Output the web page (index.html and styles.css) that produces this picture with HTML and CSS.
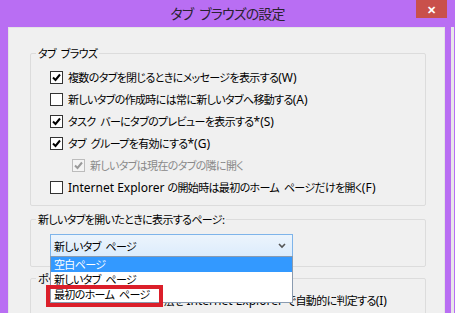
FILE: index.html
```html
<!DOCTYPE html>
<html lang="ja">
<head>
<meta charset="utf-8">
<link rel="stylesheet" href="styles.css">
</head>
<body>
<div class="window">
  <div class="titlebar">
    <div class="title">タブ ブラウズの設定</div>
    <div class="close">✕</div>
  </div>
  <div class="frame">
    <div class="client">
      <fieldset class="group g1">
        <legend>タブ ブラウズ</legend>
        <div class="row"><span class="cb on"><svg viewBox="0 0 11 11"><path d="M2 5.5 L4.5 8 L9 2.5"/></svg></span>複数のタブを閉じるときにメッセージを表示する<span class="lat">(W)</span></div>
        <div class="row"><span class="cb"></span>新しいタブの作成時には常に新しいタブへ移動する<span class="lat">(A)</span></div>
        <div class="row"><span class="cb on"><svg viewBox="0 0 11 11"><path d="M2 5.5 L4.5 8 L9 2.5"/></svg></span>タスク バーにタブのプレビューを表示する<span class="lat">*(S)</span></div>
        <div class="row"><span class="cb on"><svg viewBox="0 0 11 11"><path d="M2 5.5 L4.5 8 L9 2.5"/></svg></span>タブ グループを有効にする<span class="lat">*(G)</span></div>
        <div class="row sub disabled"><span class="cb on"><svg viewBox="0 0 11 11"><path d="M2 5.5 L4.5 8 L9 2.5"/></svg></span>新しいタブは現在のタブの隣に開く</div>
        <div class="row"><span class="cb"></span><span class="lat">Internet Explorer </span>の開始時は最初のホーム ページだけを開く<span class="lat">(F)</span></div>
      </fieldset>
      <fieldset class="group g2">
        <legend>新しいタブを開いたときに表示するページ:</legend>
        <div class="combo">
          <span class="combo-text">新しいタブ ページ</span>
          <svg class="chev" viewBox="0 0 8 6"><path d="M1 1 L4 4 L7 1"/></svg>
          <div class="list">
            <div class="item sel">空白ページ</div>
            <div class="item">新しいタブ ページ</div>
            <div class="item">最初のホーム ページ</div>
            <div class="mark"></div>
          </div>
        </div>
      </fieldset>
      <fieldset class="group g3">
        <legend>ポップアップの発生時:</legend>
        <div class="row"><span class="radio"></span>ポップアップの表示方法を<span class="lat"> Internet Explorer </span>で自動的に判定する<span class="lat">(I)</span></div>
      </fieldset>
    </div>
    <div class="rim"></div>
  </div>
</div>
</body>
</html>
```

FILE: styles.css
```css
html, body {
  margin: 0;
  padding: 0;
}
body {
  width: 455px;
  height: 313px;
  overflow: hidden;
  background: #b96ef3;
  font-family: "Noto Sans CJK JP", "Noto Sans", sans-serif;
  font-feature-settings: "palt";
  font-size: 11px;
  letter-spacing: -0.65px;
  word-spacing: 3px;
  color: #000;
}
.lat {
  font-family: "Noto Sans", "Noto Sans CJK JP", sans-serif;
  font-size: 12px;
  letter-spacing: 0;
  word-spacing: 0;
  white-space: pre;
}
.window {
  width: 455px;
  height: 313px;
  display: flex;
  flex-direction: column;
}
.titlebar {
  height: 27px;
  flex: none;
  display: flex;
  justify-content: center;
  align-items: flex-start;
  position: relative;
}
.title {
  font-size: 14px;
  line-height: 17px;
  margin-top: 5px;
  color: #2a2230;
  letter-spacing: -0.9px;
  word-spacing: 4px;
}
.close {
  position: absolute;
  top: 0;
  left: 416px;
  width: 31px;
  height: 18px;
  background: #c9504b;
  color: #fff;
  font-size: 11px;
  letter-spacing: 0;
  line-height: 18px;
  text-align: center;
  font-weight: bold;
}
.frame {
  flex: 1;
  display: flex;
  padding-left: 8px;
}
.client {
  width: 437px;
  background: #f0f0f0;
  border: 1px solid #e4e4e4;
  border-bottom: none;
  padding: 18px 0 0 21px;
  box-sizing: border-box;
  flex: none;
}
.rim {
  margin-left: 6px;
  width: 3px;
  background: #e8e8e8;
}
.group {
  width: 396px;
  box-sizing: border-box;
  margin: 0;
  border: 1px solid #dcdcdc;
  border-radius: 2px;
  padding: 0 0 0 19px;
  min-width: 0;
}
.group legend {
  padding: 0 2px;
  margin-left: -14px;
  line-height: 14px;
  height: 14px;
}
.g1 {
  padding-top: 6px;
  padding-bottom: 7px;
}
.g2 {
  margin-top: 6px;
  padding-top: 8px;
  padding-bottom: 9px;
}
.g3 {
  margin-top: 4px;
  padding-top: 4px;
  padding-bottom: 10px;
}
.row {
  height: 22px;
  display: flex;
  align-items: center;
  white-space: nowrap;
}
.row.sub {
  padding-left: 22px;
}
.row.disabled {
  color: #8a8a8a;
}
.cb {
  width: 13px;
  height: 13px;
  box-sizing: border-box;
  border: 1px solid #333;
  background: #fff;
  margin-right: 5px;
  flex: none;
  display: flex;
}
.cb svg {
  width: 11px;
  height: 11px;
}
.cb svg path {
  fill: none;
  stroke: #000;
  stroke-width: 2;
}
.disabled .cb {
  border-color: #bcbcbc;
  background: #f4f4f4;
}
.disabled .cb svg path {
  stroke: #9a9a9a;
}
.radio {
  width: 13px;
  height: 13px;
  box-sizing: border-box;
  border: 1px solid #333;
  border-radius: 50%;
  background: #fff;
  margin-right: 5px;
  flex: none;
}
.combo {
  position: relative;
  width: 243px;
  height: 23px;
  box-sizing: border-box;
  border: 1px solid #7eb4ea;
  background: linear-gradient(#ecf4fc, #dcecfc);
  display: flex;
  align-items: center;
  padding-left: 3px;
}
.combo-text {
  flex: 1;
}
.chev {
  width: 8px;
  height: 6px;
  margin-right: 6px;
}
.chev path {
  fill: none;
  stroke: #555;
  stroke-width: 1.6;
}
.list {
  position: absolute;
  left: -1px;
  top: 21px;
  width: 243px;
  height: 47px;
  box-sizing: border-box;
  border: 1px solid #8a9bb0;
  background: #fff;
  z-index: 2;
}
.item {
  height: 15px;
  line-height: 15px;
  padding-left: 3px;
  white-space: nowrap;
}
.item.sel {
  background: #3399ff;
  color: #fff;
}
.mark {
  position: absolute;
  left: -5px;
  top: 28px;
  width: 117px;
  height: 22px;
  box-sizing: border-box;
  border: 4px solid #db1f2a;
}
```
